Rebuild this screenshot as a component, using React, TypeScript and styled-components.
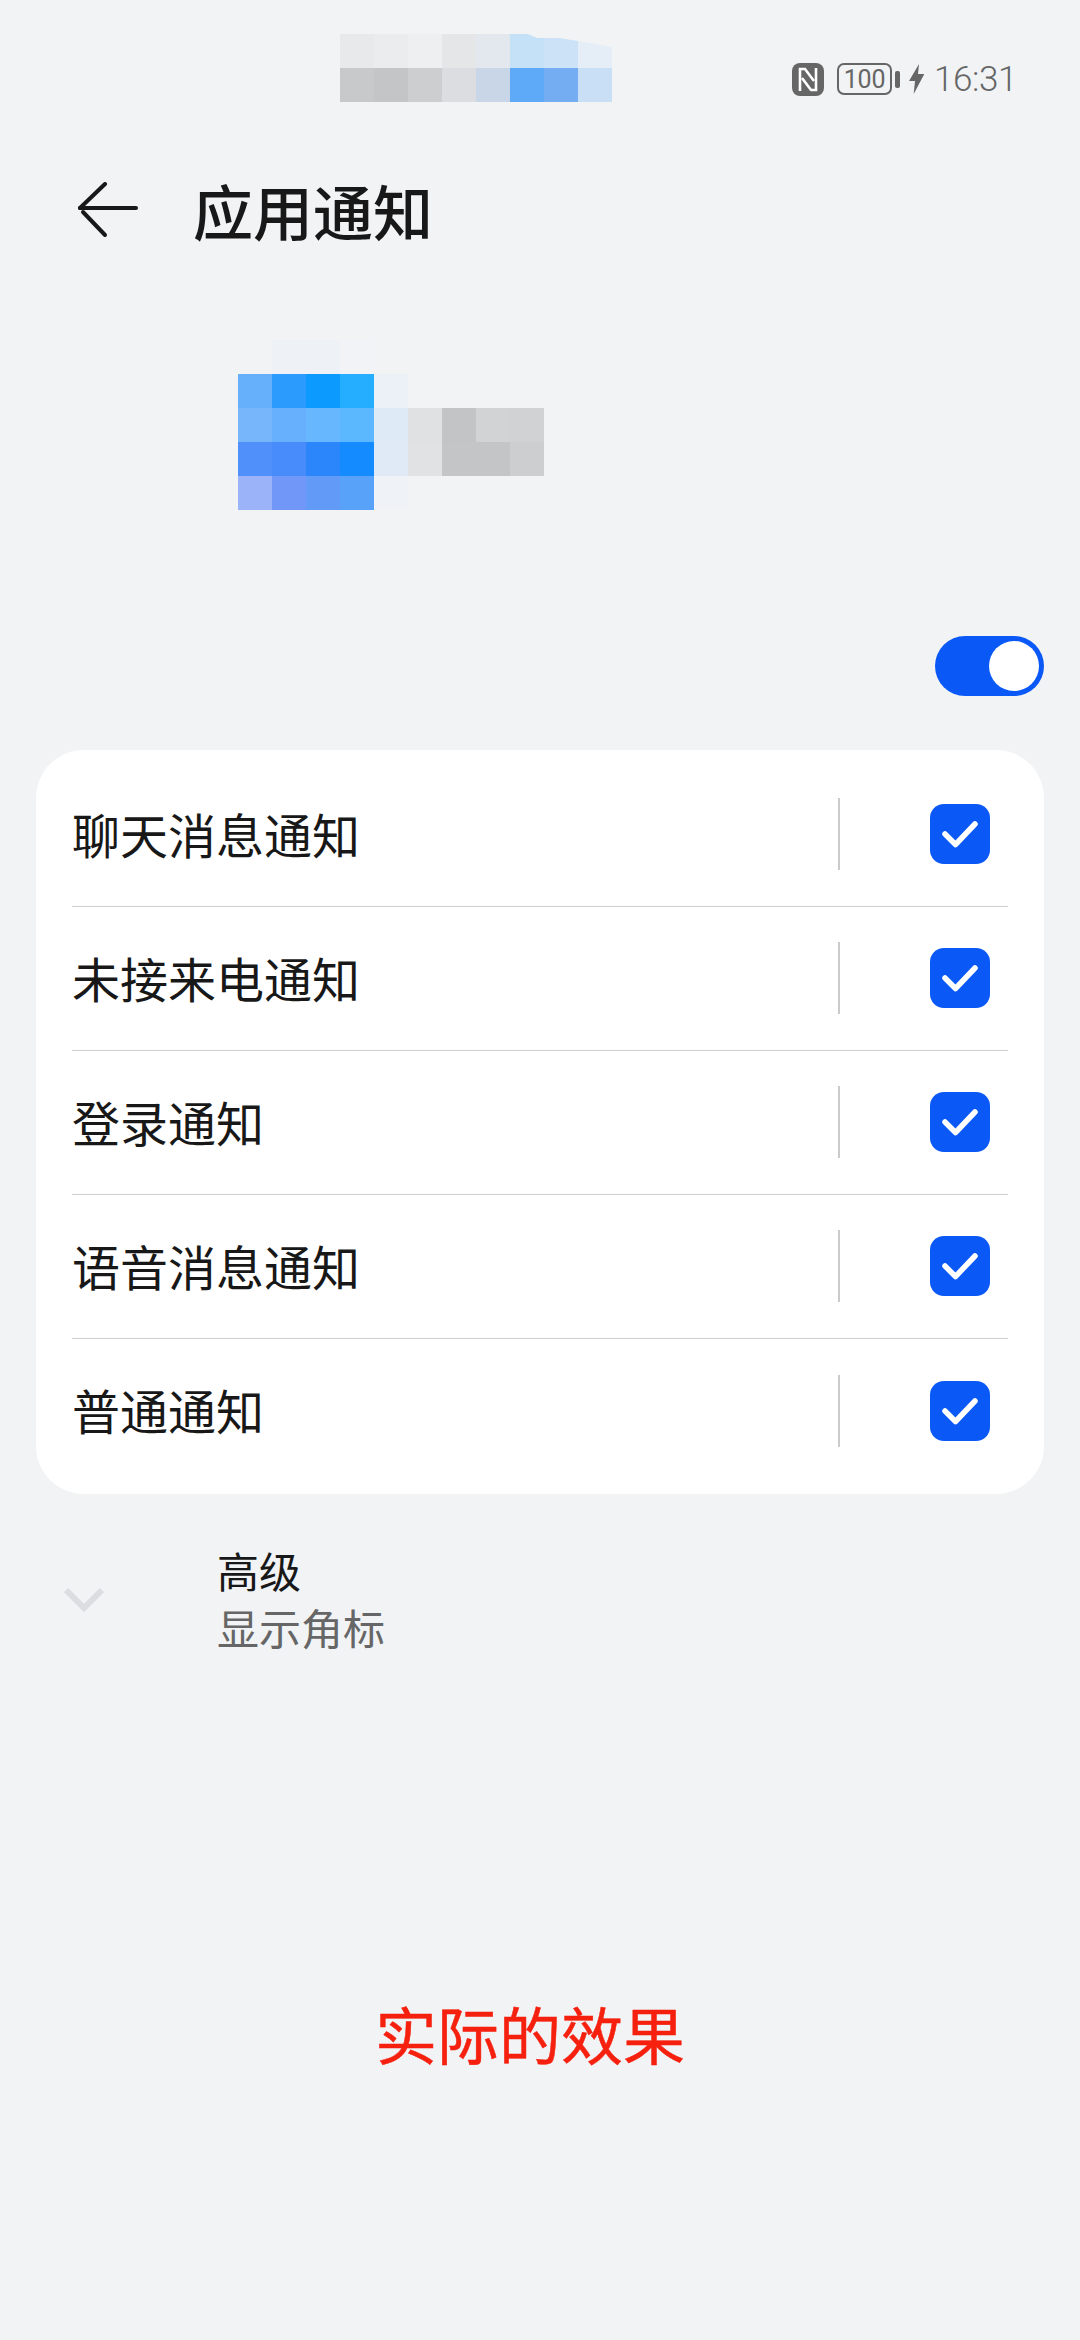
import React from "react";
import styled, { createGlobalStyle } from "styled-components";

const Global = createGlobalStyle`
  html, body { margin: 0; padding: 0; background: #f1f3f5; }
  body { font-family: "Noto Sans CJK SC", "Noto Sans", sans-serif; }
`;

const Page = styled.div`
  width: 1080px;
  height: 2340px;
  background: #f1f3f5;
  display: flex;
  flex-direction: column;
  overflow: hidden;
`;

const StatusBar = styled.div`
  height: 102px;
  padding: 34px 63px 0 340px;
  box-sizing: border-box;
  display: flex;
  align-items: flex-start;
  justify-content: space-between;
  flex: none;
`;

const Mosaic = styled.svg`
  display: block;
  flex: none;
`;

const StatusGroup = styled.div`
  display: flex;
  align-items: center;
  height: 34px;
  margin-top: 28px;
  color: #666;
`;

const Battery = styled.div`
  width: 55px;
  height: 32px;
  margin-left: 13px;
  box-sizing: border-box;
  border: 2.5px solid #666;
  border-radius: 7px;
  display: flex;
  align-items: center;
  justify-content: center;
  font: 400 25px/1 Roboto, sans-serif;
  letter-spacing: -0.2px;
`;

const BatteryNub = styled.div`
  width: 5px;
  height: 17px;
  margin-left: 3px;
  margin-right: 9px;
  border-radius: 2px;
  background: #666;
`;

const Clock = styled.span`
  font: 350 35px/1 Roboto, sans-serif;
  margin-left: 9px;
  letter-spacing: -0.4px;
`;

const Header = styled.header`
  height: 186px;
  padding: 30px 0 0 78px;
  box-sizing: border-box;
  display: flex;
  align-items: center;
  flex: none;
`;

const Title = styled.h1`
  margin: 0 0 0 55px;
  font-size: 60px;
  font-weight: 500;
  line-height: 80px;
  color: #181818;
`;

const AppMark = styled(Mosaic)`
  margin: 52px 0 0 238px;
`;

const ToggleRow = styled.div`
  margin-top: 126px;
  padding-right: 36px;
  display: flex;
  justify-content: flex-end;
`;

const Toggle = styled.div`
  width: 109px;
  height: 60px;
  border-radius: 30px;
  background: #0a59f7;
  display: flex;
  align-items: center;
  justify-content: flex-end;
  padding-right: 5px;
  box-sizing: border-box;
`;

const Knob = styled.div`
  width: 50px;
  height: 50px;
  border-radius: 50%;
  background: #fff;
`;

const Card = styled.section`
  margin: 54px 36px 0;
  padding: 13px 36px 11px;
  background: #fff;
  border-radius: 48px;
`;

const Row = styled.div<{ $last?: boolean }>`
  height: 144px;
  padding-bottom: 1px;
  box-sizing: border-box;
  display: flex;
  align-items: center;
  border-bottom: ${(p) => (p.$last ? "none" : "1px solid #cfcfd1")};
`;

const RowLabel = styled.span`
  flex: 1;
  font-size: 48px;
  line-height: 64px;
  margin-bottom: 3px;
  color: #181818;
`;

const VLine = styled.div`
  width: 2px;
  height: 72px;
  background: #cbcbcd;
`;

const Check = styled.div`
  width: 60px;
  height: 60px;
  margin: 0 18px 0 90px;
  border-radius: 14px;
  background: #0a59f7;
  display: flex;
  flex: none;
`;

const Advanced = styled.div`
  margin-top: 47px;
  padding-left: 64px;
  display: flex;
  align-items: center;
`;

const Chevron = styled.svg`
  flex: none;
  margin-top: 2px;
`;

const AdvancedText = styled.div`
  margin-left: 113px;
  display: flex;
  flex-direction: column;
`;

const AdvTitle = styled.span`
  font-size: 42px;
  line-height: 57px;
  color: #181818;
`;

const AdvSub = styled.span`
  font-size: 42px;
  line-height: 58px;
  color: #666;
`;

const Note = styled.div`
  margin: 337px 0 0 375px;
  font-size: 62px;
  font-weight: 400;
  -webkit-text-stroke: 0.5px #f6200f;
  line-height: 80px;
  color: #f6200f;
`;

type Cell = [number, number, string];

const toRects = (rows: (string | null)[][]): Cell[] =>
  rows.flatMap((r, y) => r.flatMap((c, x): Cell[] => (c ? [[x, y, c]] : [])));

const topCells = toRects([
  ["#e8e9eb", "#ebecee", "#eeeff1", "#e5e6e8", "#e3e8ee", null, null, null],
  ["#c8c9cb", "#c4c5c7", "#cdced0", "#dcdde0", "#c9d6e8", "#5eaaf8", "#74adf2", "#c8dff5"],
]);

const appCells = toRects([
  [null, "#eef1f6", "#eef1f6", "#f1f3f6"],
  ["#66b0fb", "#2b9bfe", "#0c9aff", "#25adff", "#ebf1f6"],
  ["#78b6fc", "#66b0fe", "#67b7fe", "#5bb8ff", "#deebf6", "#e0e1e3", "#c3c4c6", "#d2d3d5", "#d1d2d4"],
  ["#4f90fb", "#488cfb", "#2b85fb", "#148bff", "#e0eaf6", "#e1e2e4", "#c4c5c7", "#c4c5c7", "#cdced0"],
  ["#9bb4f9", "#7198f9", "#629af8", "#59a2fa", "#eff2f6"],
]);

const Cells = ({ cells }: { cells: Cell[] }) => (
  <>
    {cells.map(([x, y, c]) => (
      <rect key={`${x}-${y}`} x={x * 34} y={y * 34} width={34} height={34} fill={c} />
    ))}
  </>
);

const labels = ["聊天消息通知", "未接来电通知", "登录通知", "语音消息通知", "普通通知"];

export default function App() {
  return (
    <Page>
      <Global />
      <StatusBar>
        <Mosaic width={272} height={68} viewBox="0 0 272 68" aria-hidden>
          <Cells cells={topCells} />
          <path d="M170 0H188L197 4H204V34H170Z" fill="#c5e1f7" />
          <path d="M204 4H219L238 7V34H204Z" fill="#cbe2f7" />
          <path d="M238 7L272 13V34H238Z" fill="#e5eef7" />
        </Mosaic>
        <StatusGroup>
          <svg width={32} height={33} viewBox="0 0 32 33" aria-hidden>
            <rect width={32} height={33} rx={8} fill="#666" />
            <path d="M8 28V6H13L22 18" fill="none" stroke="#fff" strokeWidth={2.6} />
            <path d="M24 5V27H19L10 15" fill="none" stroke="#fff" strokeWidth={2.6} />
          </svg>
          <Battery>100</Battery>
          <BatteryNub />
          <svg width={16} height={30} viewBox="0 0 16 30" aria-hidden>
            <path d="M10 0L0 17H6L4.7 30L15.3 10H9Z" fill="#666" />
          </svg>
          <Clock>16:31</Clock>
        </StatusGroup>
      </StatusBar>

      <Header>
        <svg width={60} height={56} viewBox="0 0 60 56" aria-hidden>
          <path d="M2 26H58" fill="none" stroke="#181818" strokeWidth={4} strokeLinecap="round" />
          <path d="M27 2L2 26" fill="none" stroke="#181818" strokeWidth={4} strokeLinecap="round" />
          <path d="M5 30L27 53" fill="none" stroke="#181818" strokeWidth={4} strokeLinecap="round" />
        </svg>
        <Title>应用通知</Title>
      </Header>

      <AppMark width={306} height={170} viewBox="0 0 306 170" aria-hidden>
        <Cells cells={appCells} />
      </AppMark>

      <ToggleRow>
        <Toggle>
          <Knob />
        </Toggle>
      </ToggleRow>

      <Card>
        {labels.map((label, i) => (
          <Row key={label} $last={i === labels.length - 1}>
            <RowLabel>{label}</RowLabel>
            <VLine />
            <Check>
              <svg width={60} height={60} viewBox="0 0 60 60" aria-hidden>
                <path d="M15 30L25.5 40.5L45 20" fill="none" stroke="#fff" strokeWidth={5.5} strokeLinecap="round" strokeLinejoin="round" />
              </svg>
            </Check>
          </Row>
        ))}
      </Card>

      <Advanced>
        <Chevron width={40} height={24} viewBox="0 0 40 24" aria-hidden>
          <path d="M2 2L20 20L38 2" fill="none" stroke="#dcdde0" strokeWidth={6} />
        </Chevron>
        <AdvancedText>
          <AdvTitle>高级</AdvTitle>
          <AdvSub>显示角标</AdvSub>
        </AdvancedText>
      </Advanced>

      <Note>实际的效果</Note>
    </Page>
  );
}
